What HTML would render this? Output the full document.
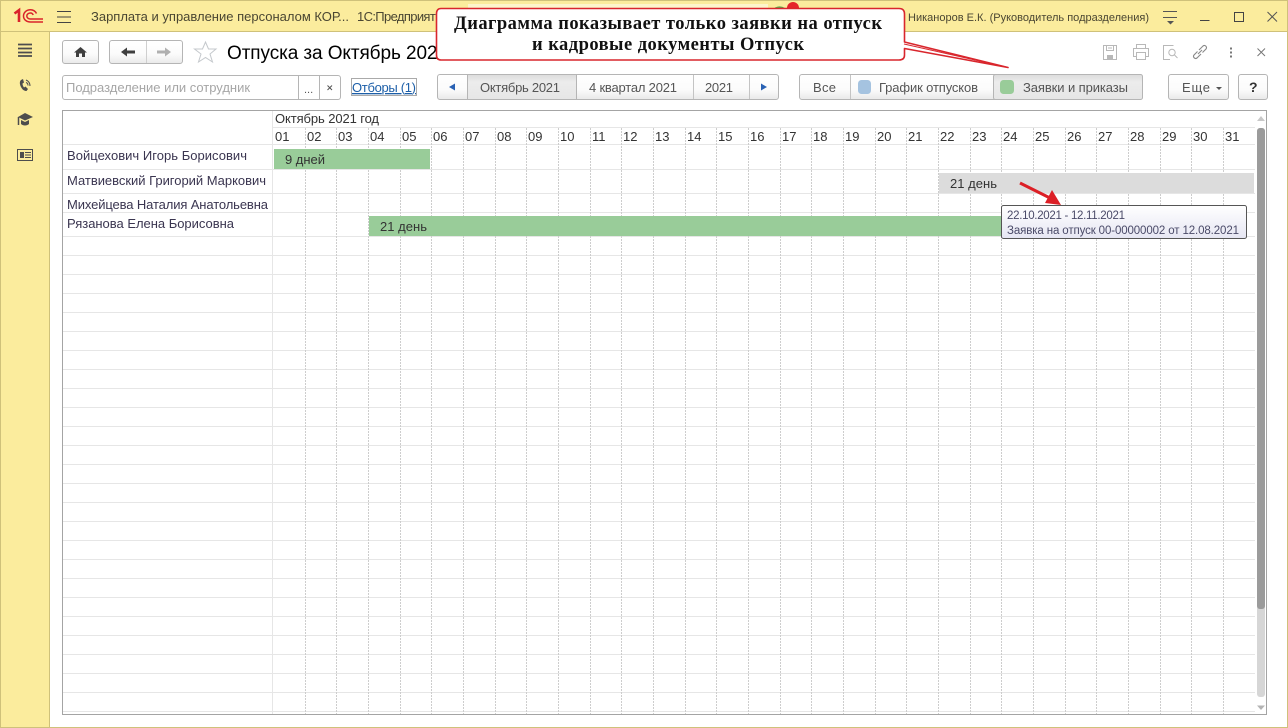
<!DOCTYPE html>
<html lang="ru"><head><meta charset="utf-8"><title>Отпуска</title>
<style>
html,body{margin:0;padding:0;background:#fff;width:1288px;height:728px;overflow:hidden}
svg{display:block;position:absolute;left:0;top:0}
text{font-family:"Liberation Sans",sans-serif;font-size:13px;fill:#3c3c3c}
.d{fill:#333;font-size:13px}
.n{fill:#3a3550;font-size:13px}
.b{fill:#555;font-size:13px}
</style></head><body>
<svg width="1288" height="728" viewBox="0 0 1288 728" xmlns="http://www.w3.org/2000/svg">
<defs>
<linearGradient id="g" x1="0" y1="0" x2="0" y2="1"><stop offset="0" stop-color="#fff"/><stop offset=".6" stop-color="#fbfbfb"/><stop offset="1" stop-color="#e9e9e9"/></linearGradient>
<linearGradient id="a" x1="0" y1="0" x2="0" y2="1"><stop offset="0" stop-color="#dcdcdc"/><stop offset=".3" stop-color="#ececec"/><stop offset="1" stop-color="#e6e6e6"/></linearGradient>
<linearGradient id="t" x1="0" y1="0" x2="0" y2="1"><stop offset="0" stop-color="#fff"/><stop offset="1" stop-color="#e6e6f3"/></linearGradient>
</defs>
<!-- window -->
<rect x="0" y="0" width="1288" height="728" fill="#cfc17a"/>
<rect x="1" y="1" width="1286" height="30" fill="#fbec9d"/>
<rect x="1" y="32" width="48" height="695" fill="#fbec9d"/>
<rect x="50" y="32" width="1237" height="695" fill="#fff"/>
<!-- logo -->
<g fill="none" stroke="#d9232b" stroke-width="1.5">
<path d="M14.500 13.500L19 10.200V22" stroke-width="2.600"/>
<path d="M36.500 13.500C35 10.800 33 9.800 30.500 9.800C26.500 9.800 23.500 12.500 23.500 16C23.500 19.500 26.500 22 30.500 22H43"/>
<path d="M33.200 15C32.700 13.800 31.700 13 30.500 13C28.500 13 26.800 14.200 26.800 16C26.800 17.800 28.500 19 30.500 19H43"/>
</g>
<path d="M57 11.500H71M57 17H71M57 22.500H71" stroke="#444" stroke-width="1"/>
<text x="91" y="21" textLength="258" style="fill:#4a4632">Зарплата и управление персоналом КОР...</text>
<text x="357" y="21" textLength="92" style="fill:#4a4632">1С:Предприятие</text>
<path d="M772 10Q778 4 785 8L783 12Z" fill="#5ea548"/><circle cx="793" cy="8" r="6" fill="#e5242b"/>
<text x="908" y="21" textLength="241" style="fill:#4a4632;font-size:11px">Никаноров Е.К. (Руководитель подразделения)</text>
<path d="M1163 11.500H1177M1163 17.500H1177" stroke="#555"/><path d="M1167 21H1174L1170.500 24.500Z" fill="#555"/>
<path d="M1200 20.500H1209.500" stroke="#444"/>
<rect x="1234.500" y="12.500" width="9" height="9" fill="none" stroke="#444"/>
<path d="M1267.500 12L1277 21.500M1277 12L1267.500 21.500" stroke="#555"/>
<!-- sidebar -->
<path d="M18 44.500H32M18 48.500H32M18 52.500H32M18 56H32" stroke="#4d4d4d" stroke-width="1.800"/>
<path d="M21 80C19 82 20 85 21 87C22.500 90 24.500 91 26.500 91L28 89L25.500 86.500L24 87.500C23 86 22.500 85 22.500 83.500L24 82.500L23 79Z" fill="#4d4d4d"/>
<path d="M26 80C28.500 81 30 83 30 86M26 82.500C27.500 83 28 84.500 28 85.500" fill="none" stroke="#4d4d4d" stroke-width="1"/>
<path d="M25 113L33 117L25 120.500L18 117Z" fill="#4d4d4d"/><path d="M21 120V124C23 126 27 126 29 124V120L25 122Z" fill="#4d4d4d"/><path d="M18.500 117V125" stroke="#4d4d4d" stroke-width="1.500"/>
<rect x="17.500" y="149.500" width="15" height="11" fill="none" stroke="#4d4d4d"/>
<rect x="20" y="152" width="4" height="6" fill="#4d4d4d"/><path d="M25 152.500H31M25 155H31M25 157.500H31" stroke="#4d4d4d"/>
<!-- nav buttons -->
<rect x="62.500" y="40.500" width="36" height="23" rx="2.500" fill="url(#g)" stroke="#b5b5b5"/>
<path d="M80.500 47L74 52.500H76V57H79V53.500H82V57H85V52.500H87Z" fill="#3f3f3f"/>
<rect x="109.500" y="40.500" width="73" height="23" rx="2.500" fill="url(#g)" stroke="#b5b5b5"/>
<path d="M146.500 41V63" stroke="#cfcfcf"/>
<path d="M121 52L127 47.500V50.500H135V53.500H127V56.500Z" fill="#3f3f3f"/>
<path d="M171 52L165 47.500V50.500H157V53.500H165V56.500Z" fill="#b0b0b0"/>
<path d="M205.500 42L208.500 49H216L210 54L212.500 62L205.500 57.500L198.500 62L201 54L194.500 49H202.500Z" fill="none" stroke="#c4c8cc" stroke-width="1"/>
<text x="227" y="59" textLength="221" style="font-size:19px;fill:#000">Отпуска за Октябрь 2021</text>
<!-- toolbar icons -->
<g fill="none" stroke="#b8b8b8">
<path d="M1103.500 45.500H1116.500V59.500H1103.500Z"/><path d="M1106.500 45.500V50.500H1113.500V45.500M1108 48H1112"/><rect x="1107" y="55" width="6" height="4.500" fill="#b8b8b8" stroke="none"/>
<path d="M1136.500 48.500V44.500H1145.500V48.500M1136.500 56.500H1133.500V48.500H1148.500V56.500H1145.500M1136.500 52.500H1145.500V59.500H1136.500Z"/>
<path d="M1173.500 45.500H1163.500V59.500H1170"/><circle cx="1172" cy="52.500" r="3.200"/><path d="M1174.500 55L1177.500 58"/>
</g>
<g fill="none" stroke="#888" stroke-width="1.100">
<path d="M1199 50L1203 46C1205 44.500 1207.500 46.800 1206 49L1202.500 52.500"/><path d="M1201 54L1197 58C1195 59.500 1192.500 57 1194 55L1197.500 51.500"/><path d="M1198 54L1202 50"/>
</g>
<path d="M1231 47.500V49.500M1231 51.500V53.500M1231 55.500V57.500" stroke="#777" stroke-width="2"/>
<path d="M1257.500 48.500L1265 56M1265 48.500L1257.500 56" stroke="#777"/>
<!-- filter row -->
<rect x="62.500" y="75.500" width="278" height="24" rx="2.500" fill="#fff" stroke="#b5b5b5"/>
<path d="M298.500 76V99M319.500 76V99" stroke="#b5b5b5"/>
<text x="66" y="92" textLength="184" style="fill:#a6a6a6">Подразделение или сотрудник</text>
<text x="304" y="93" style="fill:#555;font-size:11px">...</text>
<path d="M327.500 85.500L332 90M332 85.500L327.500 90" stroke="#555"/>
<rect x="351.500" y="78.500" width="65" height="17" fill="none" stroke="#555" stroke-dasharray="1 1"/>
<text x="352" y="92" textLength="64" style="fill:#1d5fa8" text-decoration="underline">Отборы (1)</text>
<!-- period -->
<rect x="437.500" y="74.500" width="341" height="25" rx="2.500" fill="url(#g)" stroke="#b5b5b5"/>
<rect x="467.500" y="74.500" width="109" height="25" fill="url(#a)" stroke="#b5b5b5"/>
<path d="M693.500 75V99M749.500 75V99" stroke="#c4c4c4"/>
<path d="M449 87L455 83.500V90.500Z" fill="#2a62b4"/><path d="M767 87L761 83.500V90.500Z" fill="#2a62b4"/>
<text x="480" y="92" textLength="80" class="b">Октябрь 2021</text>
<text x="589" y="92" textLength="88" class="b">4 квартал 2021</text>
<text x="705" y="92" textLength="28" class="b">2021</text>
<!-- type -->
<rect x="799.500" y="74.500" width="343" height="25" rx="2.500" fill="url(#g)" stroke="#b5b5b5"/>
<rect x="993.500" y="74.500" width="149" height="25" rx="2" fill="url(#a)" stroke="#b5b5b5"/>
<path d="M850.500 75V99" stroke="#c4c4c4"/>
<text x="813" y="92" textLength="23" class="b">Все</text>
<rect x="858" y="80" width="13" height="14" rx="3.500" fill="#a5c3e0"/>
<text x="879" y="92" textLength="99" class="b">График отпусков</text>
<rect x="1000" y="80" width="14" height="14" rx="3.500" fill="#99cc99"/>
<text x="1023" y="92" textLength="105" class="b">Заявки и приказы</text>
<rect x="1168.500" y="74.500" width="60" height="25" rx="2.500" fill="url(#g)" stroke="#b5b5b5"/>
<text x="1182" y="92" textLength="28" class="b">Еще</text><path d="M1216 87H1222L1219 90Z" fill="#555"/>
<rect x="1238.500" y="74.500" width="29" height="25" rx="2.500" fill="url(#g)" stroke="#b5b5b5"/>
<text x="1249" y="92" style="fill:#333;font-size:14px;font-weight:bold">?</text>
<!-- chart -->
<rect x="62.500" y="110.500" width="1204" height="604" fill="#fff" stroke="#a4a4a4"/>
<path d="M273 127.500H1255M63 144.500H1255M63 169.500H1255M63 193.500H1255M63 212.500H1255M63 236.500H1255M63 255.500H1255M63 274.500H1255M63 293.500H1255M63 312.500H1255M63 331.500H1255M63 350.500H1255M63 369.500H1255M63 388.500H1255M63 407.500H1255M63 426.500H1255M63 445.500H1255M63 464.500H1255M63 483.500H1255M63 502.500H1255M63 521.500H1255M63 540.500H1255M63 559.500H1255M63 578.500H1255M63 597.500H1255M63 616.500H1255M63 635.500H1255M63 654.500H1255M63 673.500H1255M63 692.500H1255M63 711.500H1255" stroke="#e6e6e6" fill="none"/>
<path d="M272.500 111V714" stroke="#e6e6e6"/>
<path d="M305.500 128V714M336.500 128V714M368.500 128V714M400.500 128V714M431.500 128V714M463.500 128V714M495.500 128V714M526.500 128V714M558.500 128V714M590.500 128V714M621.500 128V714M653.500 128V714M685.500 128V714M716.500 128V714M748.500 128V714M780.500 128V714M811.500 128V714M843.500 128V714M875.500 128V714M906.500 128V714M938.500 128V714M970.500 128V714M1001.500 128V714M1033.500 128V714M1065.500 128V714M1096.500 128V714M1128.500 128V714M1160.500 128V714M1191.500 128V714M1223.500 128V714" stroke="#cdcdcd" stroke-dasharray="2 1" fill="none"/>
<text x="275" y="123" textLength="104" class="d">Октябрь 2021 год</text>
<g>
<text class="d" x="275" y="141">01</text><text class="d" x="307" y="141">02</text><text class="d" x="338" y="141">03</text><text class="d" x="370" y="141">04</text><text class="d" x="402" y="141">05</text><text class="d" x="433" y="141">06</text><text class="d" x="465" y="141">07</text><text class="d" x="497" y="141">08</text><text class="d" x="528" y="141">09</text><text class="d" x="560" y="141">10</text><text class="d" x="592" y="141">11</text><text class="d" x="623" y="141">12</text><text class="d" x="655" y="141">13</text><text class="d" x="687" y="141">14</text><text class="d" x="718" y="141">15</text><text class="d" x="750" y="141">16</text><text class="d" x="782" y="141">17</text><text class="d" x="813" y="141">18</text><text class="d" x="845" y="141">19</text><text class="d" x="877" y="141">20</text><text class="d" x="908" y="141">21</text><text class="d" x="940" y="141">22</text><text class="d" x="972" y="141">23</text><text class="d" x="1003" y="141">24</text><text class="d" x="1035" y="141">25</text><text class="d" x="1067" y="141">26</text><text class="d" x="1098" y="141">27</text><text class="d" x="1130" y="141">28</text><text class="d" x="1162" y="141">29</text><text class="d" x="1193" y="141">30</text><text class="d" x="1225" y="141">31</text>
</g>
<text x="67" y="160" textLength="180" class="n">Войцехович Игорь Борисович</text>
<text x="67" y="185" textLength="199" class="n">Матвиевский Григорий Маркович</text>
<text x="67" y="209" textLength="201" class="n">Михейцева Наталия Анатольевна</text>
<text x="67" y="228" textLength="167" class="n">Рязанова Елена Борисовна</text>
<rect x="274" y="149" width="156" height="20" fill="#99cc99"/>
<text x="285" y="164" textLength="40" class="d">9 дней</text>
<rect x="939" y="173" width="315" height="20" fill="#dcdcdc"/>
<text x="950" y="188" textLength="47" class="d">21 день</text>
<rect x="369" y="216" width="640" height="20" fill="#99cc99"/>
<text x="380" y="231" textLength="47" class="d">21 день</text>
<!-- scrollbar -->
<rect x="1257" y="128" width="8" height="569" rx="3" fill="#d6d6d6"/>
<rect x="1257" y="128" width="8" height="481" rx="3" fill="#9b9b9b"/>
<path d="M1261 116L1265 121H1257Z" fill="#c8c8c8"/><path d="M1257 705.500H1265L1261 710Z" fill="#b4b4b4"/>
<!-- arrow -->
<path d="M1020 183L1050 198" stroke="#dc1f26" stroke-width="3"/>
<path d="M1061 205L1045 203L1052 190Z" fill="#dc1f26"/>
<!-- tooltip -->
<rect x="1001.500" y="205.500" width="245" height="33" rx="2" fill="url(#t)" stroke="#555"/>
<text x="1007" y="219" textLength="118" style="font-size:11.500px;fill:#4a4a68">22.10.2021 - 12.11.2021</text>
<text x="1007" y="234" textLength="232" style="font-size:11.500px;fill:#4a4a68">Заявка на отпуск 00-00000002 от 12.08.2021</text>
<!-- callout -->
<rect x="468" y="4" width="300" height="5" fill="#fdf5cc"/>
<path d="M441 8.500H899Q904.500 8.500 904.500 14V42L1008 67.500L904.500 48.500V55Q904.500 60 899 60H441Q436.500 60 436.500 55V14Q436.500 8.500 441 8.500Z" fill="#fff" stroke="#d9262d" stroke-width="1.600" stroke-linejoin="round"/>
<path d="M904 44L1006 67" stroke="#d9262d" stroke-width="1"/>
<text x="454" y="29" textLength="428" style="font-family:'Liberation Serif',serif;font-weight:bold;font-size:18.500px;fill:#111">Диаграмма показывает только заявки на отпуск</text>
<text x="532" y="50" textLength="272" style="font-family:'Liberation Serif',serif;font-weight:bold;font-size:18.500px;fill:#111">и кадровые документы Отпуск</text>
</svg>
</body></html>
